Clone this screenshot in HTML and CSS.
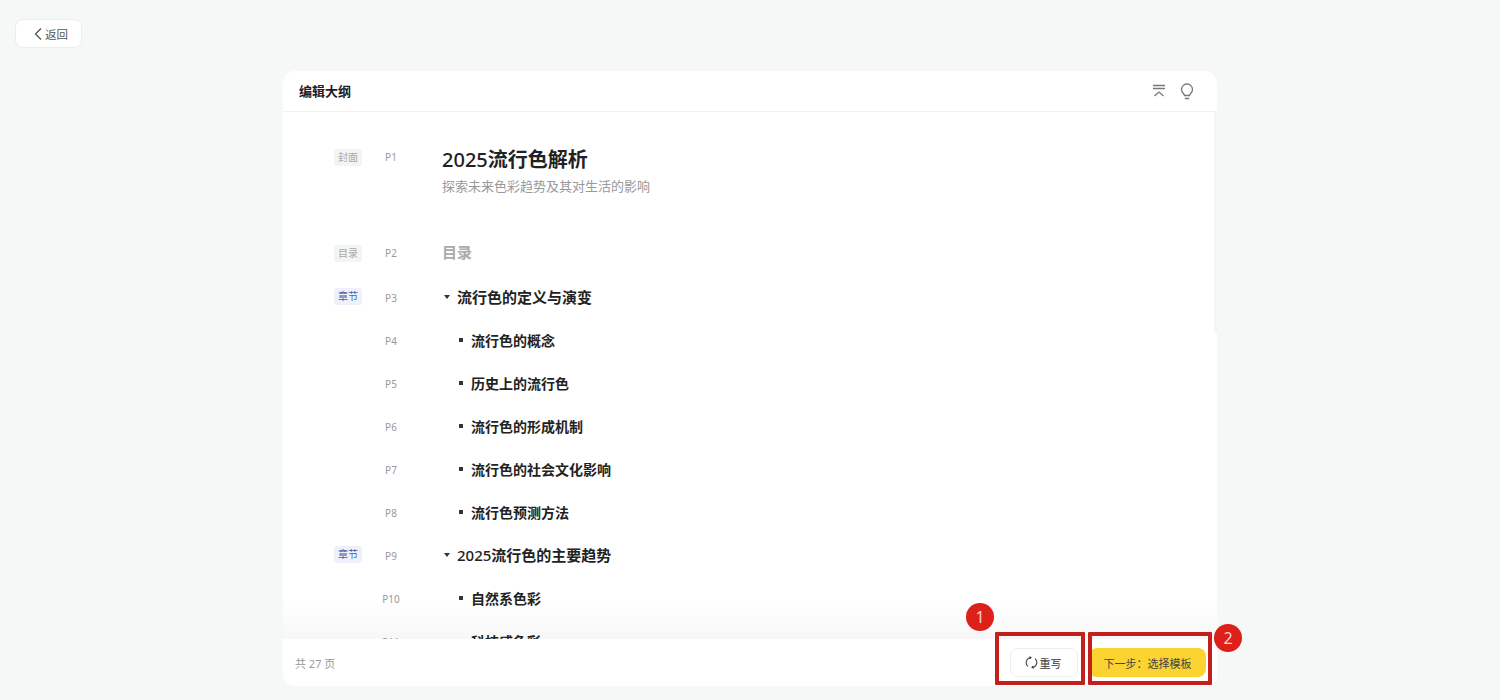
FILE: index.html
```html
<!DOCTYPE html>
<html lang="zh-CN">
<head>
    <meta charset="UTF-8">
    <meta name="viewport" content="width=device-width, initial-scale=1.0">
    <title>编辑大纲</title>
    <link rel="stylesheet" href="styles.css">
</head>
<body>

<div class="page">
    <button class="back-btn">
        <svg width="10" height="14" viewBox="0 0 10 14"><path d="M8 1.500 2.500 7 8 12.500" fill="none" stroke="#555" stroke-width="1.300"/></svg>
        <span>返回</span>
    </button>

    <div class="card">
        <div class="card-head">
            <h1>编辑大纲</h1>
            <div class="head-icons">
                <svg width="14" height="14" viewBox="0 0 14 14"><path d="M1 1.500h12M1 4.500h12M2.500 12 7 8l4.500 4" fill="none" stroke="#777" stroke-width="1.300"/></svg>
                <svg width="16" height="17" viewBox="0 0 16 17"><path d="M5.500 12.500C5.300 10.800 2.500 9.600 2.500 6.500a5.500 5.500 0 0 1 11 0c0 3.100-2.800 4.300-3 6zM5.800 15.500h4.400" fill="none" stroke="#777" stroke-width="1.300"/></svg>
            </div>
        </div>

        <div class="card-body">
            <div class="scroll-thumb"></div>
            <div class="fade"></div>

            <div class="row row-cover">
                <span class="tag-cell"><span class="tag tag-gray">封面</span></span>
                <span class="page-no">P1</span>
                <div class="cover-text">
                    <div class="cover-title"><span class="num">2025</span>流行色解析</div>
                    <div class="cover-sub">探索未来色彩趋势及其对生活的影响</div>
                </div>
            </div>

            <div class="row row-toc">
                <span class="tag-cell"><span class="tag tag-gray">目录</span></span>
                <span class="page-no">P2</span>
                <div class="toc-title">目录</div>
            </div>

            <div class="row">
                <span class="tag-cell"><span class="tag tag-blue">章节</span></span>
                <span class="page-no">P3</span>
                <div class="chapter"><i class="arrow"></i>流行色的定义与演变</div>
            </div>
            <div class="row">
                <span class="tag-cell"></span>
                <span class="page-no">P4</span>
                <div class="section"><i class="dot"></i>流行色的概念</div>
            </div>
            <div class="row">
                <span class="tag-cell"></span>
                <span class="page-no">P5</span>
                <div class="section"><i class="dot"></i>历史上的流行色</div>
            </div>
            <div class="row">
                <span class="tag-cell"></span>
                <span class="page-no">P6</span>
                <div class="section"><i class="dot"></i>流行色的形成机制</div>
            </div>
            <div class="row">
                <span class="tag-cell"></span>
                <span class="page-no">P7</span>
                <div class="section"><i class="dot"></i>流行色的社会文化影响</div>
            </div>
            <div class="row">
                <span class="tag-cell"></span>
                <span class="page-no">P8</span>
                <div class="section"><i class="dot"></i>流行色预测方法</div>
            </div>
            <div class="row">
                <span class="tag-cell"><span class="tag tag-blue">章节</span></span>
                <span class="page-no">P9</span>
                <div class="chapter"><i class="arrow"></i><span><span class="num">2025</span>流行色的主要趋势</span></div>
            </div>
            <div class="row">
                <span class="tag-cell"></span>
                <span class="page-no">P10</span>
                <div class="section"><i class="dot"></i>自然系色彩</div>
            </div>
            <div class="row">
                <span class="tag-cell"></span>
                <span class="page-no">P11</span>
                <div class="section"><i class="dot"></i>科技感色彩</div>
            </div>
        </div>

        <div class="card-foot">
            <span class="total">共 27 页</span>
            <div class="foot-btns">
                <button class="rewrite-btn">
                    <svg width="13" height="13" viewBox="0 0 13 13"><path d="M3 10.300A5 5 0 0 1 6 1.500M10 2.700A5 5 0 0 1 7 11.500M4.400.8 6 1.500 5 3M8.600 12.200 7 11.500 8 10" fill="none" stroke="#444" stroke-width="1.100"/></svg>
                    <span>重写</span>
                </button>
                <button class="next-btn">下一步：选择模板</button>
            </div>
        </div>
    </div>

    <!-- red marks drawn on top of the screenshot -->
    <div class="mark-box mark-box-1"></div>
    <div class="mark-box mark-box-2"></div>
    <div class="mark-num mark-num-1">1</div>
    <div class="mark-num mark-num-2">2</div>
</div>

</body>
</html>
```

FILE: styles.css
```css
* {
    box-sizing: border-box;
}
body {
    margin: 0;
    background-color: #f6f8f8;
    color: #222;
    font-family: "Noto Sans", "Noto Sans CJK SC", sans-serif;
    overflow: hidden;
}
.page {
    position: relative;
    height: 700px;
    padding: 19px 15px 0;
}
button {
    font-family: inherit;
    cursor: pointer;
}
.back-btn {
    display: flex;
    align-items: center;
    justify-content: flex-end;
    gap: 2px;
    width: 67px;
    height: 29px;
    padding: 0 13px 0 0;
    background-color: #fff;
    border: 1px solid #eceeee;
    border-radius: 8px;
    color: #555;
    font-size: 11.5px;
}
.card {
    display: flex;
    flex-direction: column;
    width: 934px;
    height: 615px;
    margin: 23px 0 0 268px;
    background-color: #fff;
    border-radius: 12px;
    overflow: hidden;
}
.card-head {
    display: flex;
    flex-shrink: 0;
    align-items: center;
    justify-content: space-between;
    height: 41px;
    padding: 0 22px 0 16px;
    border-bottom: 1px solid #f1f2f2;
}
.card-head h1 {
    margin: 0 0 2px;
    font-size: 13px;
    font-weight: 700;
    color: #1c1c28;
}
.head-icons {
    display: flex;
    align-items: center;
    gap: 13px;
}
.card-body {
    position: relative;
    flex: 1;
    overflow: hidden;
    padding-top: 24px;
}
.scroll-thumb {
    position: absolute;
    top: 0;
    right: 0;
    width: 3px;
    height: 221px;
    background-color: #f4f5f5;
}
.fade {
    position: absolute;
    left: 0;
    right: 0;
    bottom: 0;
    height: 40px;
    background: linear-gradient(rgba(247, 247, 247, 0), #f7f7f7);
}
.row {
    position: relative;
    display: grid;
    grid-template-columns: 41px 46px 1fr;
    align-items: center;
    height: 43px;
    padding-left: 44px;
}
.row-cover {
    align-items: start;
    height: 95px;
    padding-top: 13px;
}
.row-toc {
    height: 44px;
}
.tag-cell {
    display: flex;
    justify-content: flex-start;
    padding-left: 7px;
}
.tag {
    width: 28px;
    height: 17px;
    line-height: 17px;
    text-align: center;
    font-size: 10px;
    border-radius: 3px;
}
.tag-gray {
    background-color: #f3f4f4;
    color: #aaa;
}
.tag-blue {
    background-color: #eff1fa;
    color: #4a5fa8;
}
.page-no {
    padding-top: 2px;
    text-align: center;
    font-size: 10px;
    color: #999;
}
.row-cover .page-no,
.row-toc .page-no {
    padding-top: 0;
    line-height: 17px;
}
.num {
    font-weight: 500;
}
.cover-text {
    padding-left: 28px;
    margin-top: -4px;
}
.cover-title {
    font-size: 20px;
    font-weight: 700;
    line-height: 30px;
    color: #222;
}
.cover-sub {
    margin-top: 2px;
    font-size: 13px;
    line-height: 18px;
    color: #999;
}
.toc-title {
    padding-left: 28px;
    padding-bottom: 4px;
    font-size: 15px;
    font-weight: 700;
    color: #aaa;
}
.chapter,
.section {
    display: flex;
    align-items: center;
    font-weight: 700;
    color: #222;
}
.chapter {
    padding-left: 30px;
    font-size: 15px;
}
.section {
    padding-left: 45px;
    font-size: 14px;
}
.arrow {
    width: 0;
    height: 0;
    margin-right: 7px;
    border-left: 3px solid transparent;
    border-right: 3px solid transparent;
    border-top: 4px solid #333;
}
.dot {
    width: 4px;
    height: 4px;
    margin-right: 8px;
    background-color: #333;
}
.card-foot {
    display: flex;
    flex-shrink: 0;
    align-items: center;
    justify-content: space-between;
    height: 47px;
    padding: 0 11px 0 12px;
    background-color: #fff;
}
.total {
    font-size: 11px;
    color: #999;
}
.foot-btns {
    display: flex;
    align-items: center;
    gap: 11px;
}
.rewrite-btn {
    display: flex;
    align-items: center;
    justify-content: center;
    gap: 2px;
    width: 68px;
    height: 29px;
    padding: 0 2px 0 0;
    background-color: #fff;
    border: 1px solid #eceeee;
    border-radius: 8px;
    color: #333;
    font-size: 11px;
}
.next-btn {
    width: 117px;
    height: 29px;
    padding: 0;
    background-color: #fbd432;
    border: none;
    border-radius: 8px;
    color: #444;
    font-size: 11px;
}
.mark-box {
    position: absolute;
    top: 632px;
    height: 53px;
    border: 4px solid #c3201c;
    border-radius: 1px;
}
.mark-box-1 {
    left: 995px;
    width: 90px;
}
.mark-box-2 {
    left: 1088px;
    width: 124px;
}
.mark-num {
    position: absolute;
    width: 28px;
    height: 28px;
    line-height: 28px;
    text-align: center;
    background-color: #dd201a;
    border-radius: 50%;
    color: #f5d5d0;
    font-size: 16px;
}
.mark-num-1 {
    left: 966px;
    top: 603px;
}
.mark-num-2 {
    left: 1214px;
    top: 624px;
}
```
